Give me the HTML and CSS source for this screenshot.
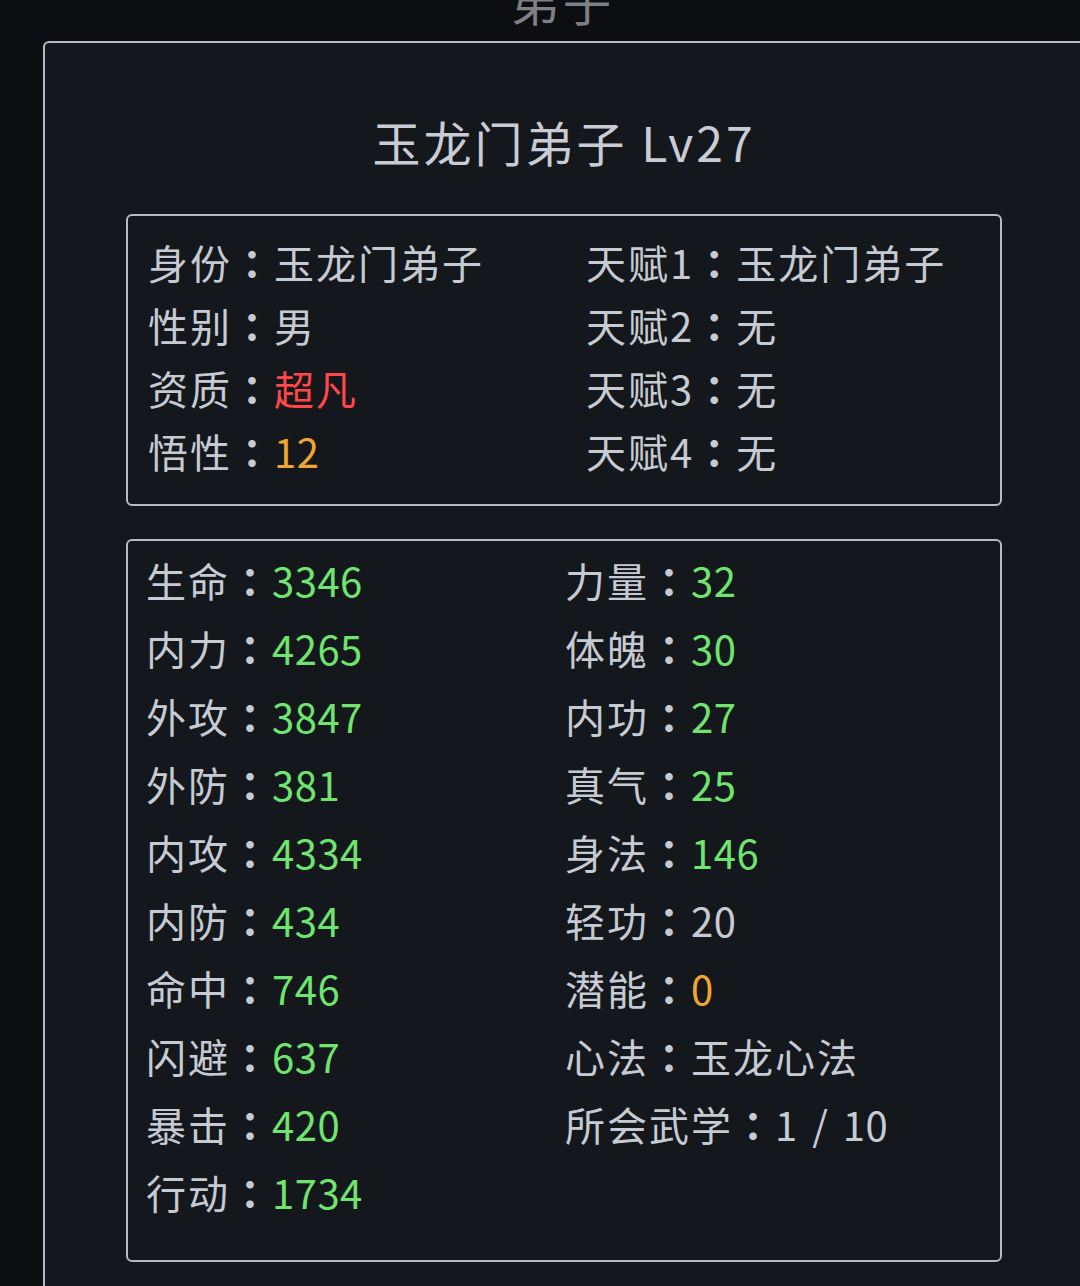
FILE: index.html
```html
<!DOCTYPE html>
<html lang="zh-CN">
<head>
<meta charset="utf-8">
<title>弟子</title>
<link rel="stylesheet" href="styles.css">
</head>
<body>
<div class="page">
  <div class="page-title">弟子</div>
  <div class="panel">
    <div class="panel-title">玉龙门弟子 Lv27</div>
    <div class="box info">
      <div class="cell">身份<span class="colon" lang="ja">：</span><span>玉龙门弟子</span></div>
      <div class="cell">天赋1<span class="colon" lang="ja">：</span><span>玉龙门弟子</span></div>
      <div class="cell">性别<span class="colon" lang="ja">：</span><span>男</span></div>
      <div class="cell">天赋2<span class="colon" lang="ja">：</span><span>无</span></div>
      <div class="cell">资质<span class="colon" lang="ja">：</span><span class="red">超凡</span></div>
      <div class="cell">天赋3<span class="colon" lang="ja">：</span><span>无</span></div>
      <div class="cell">悟性<span class="colon" lang="ja">：</span><span class="num orange">12</span></div>
      <div class="cell">天赋4<span class="colon" lang="ja">：</span><span>无</span></div>
    </div>
    <div class="box stats">
      <div class="cell">生命<span class="colon" lang="ja">：</span><span class="num green">3346</span></div>
      <div class="cell">力量<span class="colon" lang="ja">：</span><span class="num green">32</span></div>
      <div class="cell">内力<span class="colon" lang="ja">：</span><span class="num green">4265</span></div>
      <div class="cell">体魄<span class="colon" lang="ja">：</span><span class="num green">30</span></div>
      <div class="cell">外攻<span class="colon" lang="ja">：</span><span class="num green">3847</span></div>
      <div class="cell">内功<span class="colon" lang="ja">：</span><span class="num green">27</span></div>
      <div class="cell">外防<span class="colon" lang="ja">：</span><span class="num green">381</span></div>
      <div class="cell">真气<span class="colon" lang="ja">：</span><span class="num green">25</span></div>
      <div class="cell">内攻<span class="colon" lang="ja">：</span><span class="num green">4334</span></div>
      <div class="cell">身法<span class="colon" lang="ja">：</span><span class="num green">146</span></div>
      <div class="cell">内防<span class="colon" lang="ja">：</span><span class="num green">434</span></div>
      <div class="cell">轻功<span class="colon" lang="ja">：</span><span class="num">20</span></div>
      <div class="cell">命中<span class="colon" lang="ja">：</span><span class="num green">746</span></div>
      <div class="cell">潜能<span class="colon" lang="ja">：</span><span class="num orange">0</span></div>
      <div class="cell">闪避<span class="colon" lang="ja">：</span><span class="num green">637</span></div>
      <div class="cell">心法<span class="colon" lang="ja">：</span><span>玉龙心法</span></div>
      <div class="cell">暴击<span class="colon" lang="ja">：</span><span class="num green">420</span></div>
      <div class="cell">所会武学<span class="colon" lang="ja">：</span><span class="num frac">1 / 10</span></div>
      <div class="cell">行动<span class="colon" lang="ja">：</span><span class="num green">1734</span></div>
      <div class="cell"></div>
    </div>
  </div>
</div>
</body>
</html>
```
FILE: styles.css
```css
html, body {
  margin: 0;
  padding: 0;
  background: #0d0e11;
  overflow: hidden;
}
body {
  width: 1080px;
  height: 1286px;
  font-family: "Noto Sans CJK SC", "Noto Sans", sans-serif;
  color: #c6cad2;
}
.page {
  margin-left: 43px;
  width: 1040px;
}
.page-title {
  font-size: 48px;
  line-height: 48px;
  height: 48px;
  margin-top: -24px;
  margin-bottom: 17px;
  text-align: center;
  letter-spacing: 4px;
  color: #7e8085;
}
.panel {
  box-sizing: border-box;
  border: 2px solid #b6bac2;
  border-right: none;
  border-radius: 6px 0 0 0;
  background: #14171c;
  height: 1300px;
  padding-top: 68px;
}
.panel-title {
  font-size: 48px;
  line-height: 60px;
  text-align: center;
  letter-spacing: 3px;
  color: #c9ccd4;
  margin-bottom: 43px;
}
.box {
  box-sizing: border-box;
  width: 876px;
  margin-left: 81px;
  border: 2px solid #b6bac2;
  border-radius: 6px;
  display: grid;
  font-size: 40px;
  letter-spacing: 2px;
}
.info {
  grid-template-columns: 438px 1fr;
  grid-auto-rows: 63px;
  line-height: 63px;
  padding: 15px 0 21px 20px;
}
.stats {
  margin-top: 33px;
  grid-template-columns: 419px 1fr;
  grid-auto-rows: 68px;
  line-height: 68px;
  padding: 5px 0 34px 18px;
}
.cell {
  white-space: nowrap;
}
.colon {
  font-family: "Noto Sans CJK JP", "Noto Sans CJK SC", sans-serif;
  font-weight: 700;
}
.num {
  letter-spacing: 0.5px;
}
.frac {
  word-spacing: 5px;
}
.green { color: #6fe46f; }
.red { color: #ff4747; }
.orange { color: #f0a632; }
```
